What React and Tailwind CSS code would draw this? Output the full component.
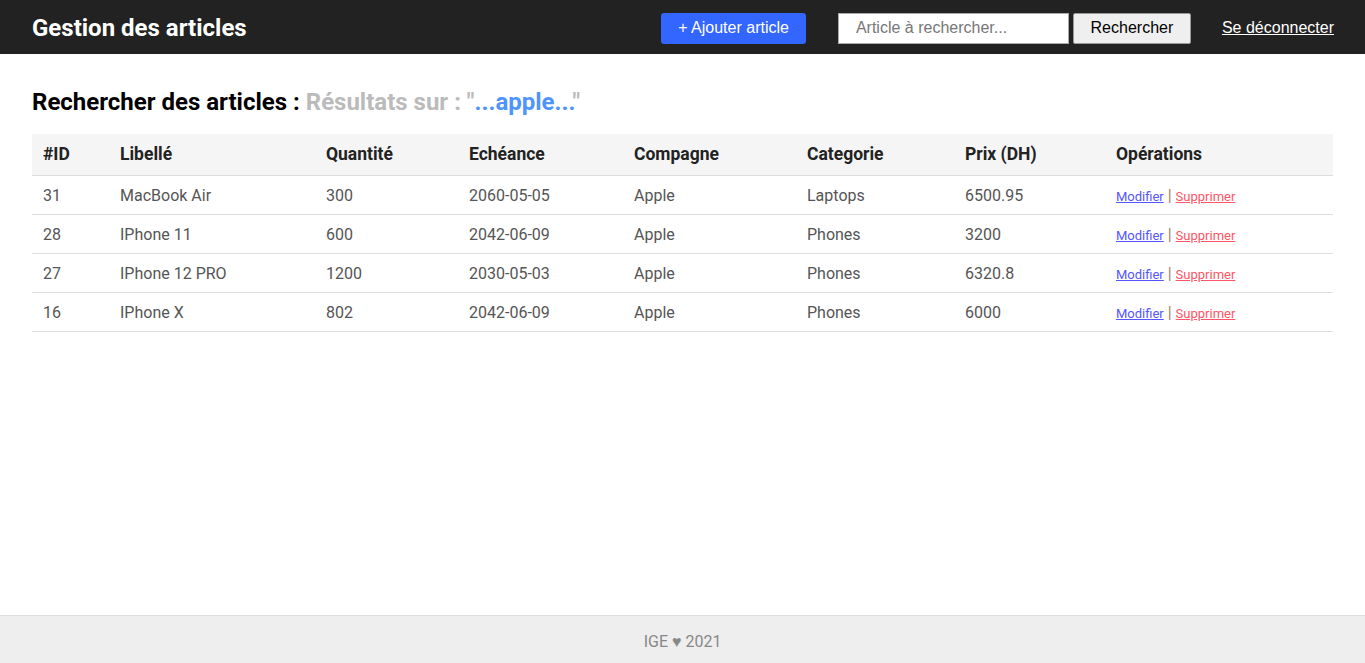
const articles = [
	{ id: 31, libelle: 'MacBook Air', quantite: 300, echeance: '2060-05-05', compagne: 'Apple', categorie: 'Laptops', prix: '6500.95' },
	{ id: 28, libelle: 'IPhone 11', quantite: 600, echeance: '2042-06-09', compagne: 'Apple', categorie: 'Phones', prix: '3200' },
	{ id: 27, libelle: 'IPhone 12 PRO', quantite: 1200, echeance: '2030-05-03', compagne: 'Apple', categorie: 'Phones', prix: '6320.8' },
	{ id: 16, libelle: 'IPhone X', quantite: 802, echeance: '2042-06-09', compagne: 'Apple', categorie: 'Phones', prix: '6000' },
];

const headers = [
	['#ID', 'w-[77px]'],
	['Libellé', 'w-[206px]'],
	['Quantité', 'w-[143px]'],
	['Echéance', 'w-[165px]'],
	['Compagne', 'w-[173px]'],
	['Categorie', 'w-[158px]'],
	['Prix (DH)', 'w-[151px]'],
	['Opérations', ''],
];

export default function App() {
	return (
		<div className="h-screen flex flex-col bg-white font-['Roboto',sans-serif]">
			{/* Top bar */}
			<header className="h-[54px] bg-[#222222] flex items-center pl-8 pr-[31px] shrink-0">
				<h1 className="text-[24px] font-bold text-white pt-[2px]">Gestion des articles</h1>
				<div className="ml-auto flex items-center pt-[2px] font-['Liberation_Sans',Arial,sans-serif] text-[16px]">
					<button className="h-[31px] px-[17px] rounded-[3px] bg-[#3366ff] text-white">+ Ajouter article</button>
					<input
						type="text"
						placeholder="Article à rechercher..."
						className="ml-[32px] h-[31px] w-[231px] px-[17px] bg-white border border-[#aaa] text-[#333] placeholder:text-[#777] outline-none"
					/>
					<button className="ml-[4px] h-[31px] w-[118px] bg-[#efefef] border border-[#999] rounded-[2px] text-black">Rechercher</button>
					<a href="#" className="ml-[31px] text-white underline">Se déconnecter</a>
				</div>
			</header>

			<main className="flex-1 px-8 pt-[30px]">
				<h2 className="text-[24px] font-bold text-black">
					Rechercher des articles : <span className="text-[#bbbbbb]">Résultats sur : "<span className="text-[#4d94ff]">...apple...</span>"</span>
				</h2>

				<table className="w-full mt-[14px] border-collapse text-left">
					<thead className="bg-[#f5f5f5]">
						<tr className="border-b border-[#dddddd]">
							{headers.map(([h, w]) => (
								<th key={h} className={`${w} h-[41px] px-[11px] text-[17.5px] font-bold text-[#222]`}>{h}</th>
							))}
						</tr>
					</thead>
					<tbody>
						{articles.map((a) => (
							<tr key={a.id} className="border-b border-[#dddddd] text-[16px] text-[#555]">
								<td className="h-[39px] px-[11px] pt-[2px]">{a.id}</td>
								<td className="px-[11px] pt-[2px]">{a.libelle}</td>
								<td className="px-[11px] pt-[2px]">{a.quantite}</td>
								<td className="px-[11px] pt-[2px]">{a.echeance}</td>
								<td className="px-[11px] pt-[2px]">{a.compagne}</td>
								<td className="px-[11px] pt-[2px]">{a.categorie}</td>
								<td className="px-[11px] pt-[2px]">{a.prix}</td>
								<td className="px-[11px] pt-[2px] text-[13px]">
									<a href="#" className="text-[#5555ff] underline">Modifier</a>
									<span className="text-[#a08060] text-[16px]"> | </span>
									<a href="#" className="text-[#ff5566] underline">Supprimer</a>
								</td>
							</tr>
						))}
					</tbody>
				</table>
			</main>

			<footer className="h-[48px] shrink-0 bg-[#eeeeee] border-t border-[#dddddd] flex items-center justify-center pt-[4px] text-[16px] text-[#888]">
				IGE ♥ 2021
			</footer>
		</div>
	);
}
